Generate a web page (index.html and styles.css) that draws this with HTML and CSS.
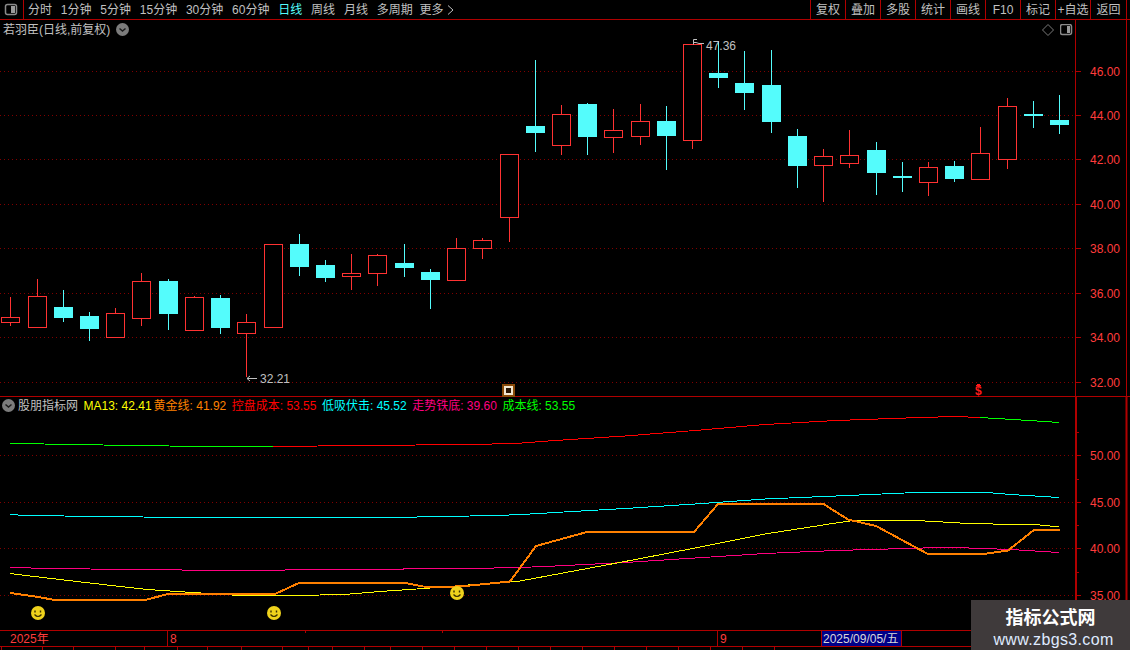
FILE: index.html
```html
<!DOCTYPE html>
<html lang="zh-CN">
<head>
<meta charset="utf-8">
<title>若羽臣 日线</title>
<link rel="stylesheet" href="styles.css">
</head>
<body>
<div class="app">
  <header class="toolbar">
    <button class="panel-btn"><svg width="18" height="14" viewBox="0 0 18 14"><rect class="ico-frame" x="2.500" y="1.500" width="11" height="10" rx="2"/><rect class="ico-fill" x="8" y="3" width="4" height="7"/></svg></button>
    <nav class="periods">
      <span>分时</span><span>1分钟</span><span>5分钟</span><span>15分钟</span><span>30分钟</span><span>60分钟</span>
      <span class="active">日线</span><span>周线</span><span>月线</span><span>多周期</span>
      <span class="more">更多<svg width="9" height="12" viewBox="0 0 9 12"><path class="chev" d="M2 1.500 7 6 2 10.500"/></svg></span>
    </nav>
    <div class="tools">
      <span>复权</span><span>叠加</span><span>多股</span><span>统计</span><span>画线</span><span>F10</span><span>标记</span><span>+自选</span><span>返回</span>
    </div>
  </header>

  <section class="pane pane-main">
    <svg class="chart" viewBox="0 20 1130 376" width="1130" height="376">
      <g class="grid">
        <path d="M0 71.500H1075M0 115.500H1075M0 159.500H1075M0 204.500H1075M0 248.500H1075M0 293.500H1075M0 337.500H1075M0 382.500H1075"/>
      </g>
      <path class="axis" d="M1075.500 20V396M1126.500 20V396"/>
      <path class="axis" d="M1075 71.500H1081M1075 115.500H1081M1075 159.500H1081M1075 204.500H1081M1075 248.500H1081M1075 293.500H1081M1075 337.500H1081M1075 382.500H1081"/>
      <g class="axis-text">
        <text x="1090" y="76">46.00</text><text x="1090" y="120">44.00</text><text x="1090" y="164">42.00</text><text x="1090" y="209">40.00</text><text x="1090" y="253">38.00</text><text x="1090" y="298">36.00</text><text x="1090" y="342">34.00</text><text x="1090" y="387">32.00</text>
      </g>

      <g class="up"><path d="M10.500 297V317M10.500 323V326"/><rect x="1.500" y="317.500" width="18" height="5"/></g>
      <g class="up"><path d="M37.500 279V296"/><rect x="28.500" y="296.500" width="18" height="31"/></g>
      <g class="down"><path d="M63.500 290V322"/><rect x="54.500" y="307.500" width="18" height="10"/></g>
      <g class="down"><path d="M89.500 312V341"/><rect x="80.500" y="316.500" width="18" height="12"/></g>
      <g class="up"><path d="M115.500 308V313"/><rect x="106.500" y="313.500" width="18" height="24"/></g>
      <g class="up"><path d="M141.500 273V281M141.500 319V326"/><rect x="132.500" y="281.500" width="18" height="37"/></g>
      <g class="down"><path d="M168.500 279V330"/><rect x="159.500" y="281.500" width="18" height="32"/></g>
      <g class="up"><path d="M194.500 296V297"/><rect x="185.500" y="297.500" width="18" height="33"/></g>
      <g class="down"><path d="M220.500 295V334"/><rect x="211.500" y="298.500" width="18" height="29"/></g>
      <g class="up"><path d="M246.500 314V322M246.500 334V377"/><rect x="237.500" y="322.500" width="18" height="11"/></g>
      <g class="up"><rect x="264.500" y="244.500" width="18" height="83"/></g>
      <g class="down"><path d="M299.500 234V276"/><rect x="290.500" y="244.500" width="18" height="22"/></g>
      <g class="down"><path d="M325.500 260V282"/><rect x="316.500" y="265.500" width="18" height="12"/></g>
      <g class="up"><path d="M351.500 254V273M351.500 277V290"/><rect x="342.500" y="273.500" width="18" height="3"/></g>
      <g class="up"><path d="M377.500 254V255M377.500 274V286"/><rect x="368.500" y="255.500" width="18" height="18"/></g>
      <g class="down"><path d="M404.500 244V277"/><rect x="395.500" y="263.500" width="18" height="4"/></g>
      <g class="down"><path d="M430.500 269V309"/><rect x="421.500" y="272.500" width="18" height="7"/></g>
      <g class="up"><path d="M456.500 238V248"/><rect x="447.500" y="248.500" width="18" height="32"/></g>
      <g class="up"><path d="M482.500 238V240M482.500 249V259"/><rect x="473.500" y="240.500" width="18" height="8"/></g>
      <g class="up"><path d="M509.500 218V242"/><rect x="500.500" y="154.500" width="18" height="63"/></g>
      <g class="down"><path d="M535.500 60V152"/><rect x="526.500" y="126.500" width="18" height="6"/></g>
      <g class="up"><path d="M561.500 105V114M561.500 146V155"/><rect x="552.500" y="114.500" width="18" height="31"/></g>
      <g class="down"><path d="M587.500 103V155"/><rect x="578.500" y="104.500" width="18" height="32"/></g>
      <g class="up"><path d="M613.500 109V130M613.500 138V153"/><rect x="604.500" y="130.500" width="18" height="7"/></g>
      <g class="up"><path d="M640.500 104V121M640.500 137V145"/><rect x="631.500" y="121.500" width="18" height="15"/></g>
      <g class="down"><path d="M666.500 106V170"/><rect x="657.500" y="121.500" width="18" height="14"/></g>
      <g class="up"><path d="M692.500 141V149"/><rect x="683.500" y="44.500" width="18" height="96"/></g>
      <g class="down"><path d="M718.500 41V88"/><rect x="709.500" y="73.500" width="18" height="4"/></g>
      <g class="down"><path d="M744.500 51V110"/><rect x="735.500" y="83.500" width="18" height="9"/></g>
      <g class="down"><path d="M771.500 50V133"/><rect x="762.500" y="85.500" width="18" height="36"/></g>
      <g class="down"><path d="M797.500 129V188"/><rect x="788.500" y="136.500" width="18" height="29"/></g>
      <g class="up"><path d="M823.500 149V156M823.500 166V202"/><rect x="814.500" y="156.500" width="18" height="9"/></g>
      <g class="up"><path d="M849.500 130V155M849.500 164V168"/><rect x="840.500" y="155.500" width="18" height="8"/></g>
      <g class="down"><path d="M876.500 142V195"/><rect x="867.500" y="150.500" width="18" height="22"/></g>
      <g class="down"><path d="M902.500 162V192"/><rect x="893.500" y="176.500" width="18" height="1"/></g>
      <g class="up"><path d="M928.500 162V167M928.500 183V196"/><rect x="919.500" y="167.500" width="18" height="15"/></g>
      <g class="down"><path d="M954.500 161V182"/><rect x="945.500" y="166.500" width="18" height="12"/></g>
      <g class="up"><path d="M980.500 127V153"/><rect x="971.500" y="153.500" width="18" height="26"/></g>
      <g class="up"><path d="M1007.500 98V106M1007.500 160V169"/><rect x="998.500" y="106.500" width="18" height="53"/></g>
      <g class="down"><path d="M1033.500 101V128"/><rect x="1024.500" y="114.500" width="18" height="1"/></g>
      <g class="down"><path d="M1059.500 95V134"/><rect x="1050.500" y="120.500" width="18" height="4"/></g>

      <path class="note-line" d="M247 378.500H257M247 378.500 250 376M247 378.500 250 381"/>
      <text class="note" x="260" y="383">32.21</text>
      <path class="note-line" d="M697 39.500H693.500V44.500M693.500 42.500H696L699 43.500H704"/>
      <text class="note" x="706" y="50">47.36</text>

      <path class="dollar-top" d="M976 385.500H981M977 384.500H980"/>
    </svg>
    <div class="pane-title">
      <span>若羽臣(日线,前复权)</span>
      <svg class="round-chev" width="13" height="13" viewBox="0 0 13 13"><circle cx="6.500" cy="6.500" r="6.500"/><path d="M3.500 5.500 6.500 8 9.500 5.500"/></svg>
    </div>
    <div class="pane-icons">
      <svg width="12" height="12" viewBox="0 0 12 12"><path class="diamond" d="M6 .5 11.500 6 6 11.500 .5 6Z"/></svg>
      <svg width="13" height="12" viewBox="0 0 13 12"><rect class="ico-frame" x=".5" y=".5" width="11" height="10" rx="2"/><rect class="ico-fill" x="7" y="2" width="3" height="7"/></svg>
    </div>
  </section>

  <section class="pane pane-sub">
    <svg class="chart" viewBox="0 397 1130 233" width="1130" height="233">
      <path class="grid-line" d="M0 455.500H1075M0 502.500H1075M0 548.500H1075M0 595.500H1075"/>
      <path class="axis heavy" d="M1076 397V630M1126.500 397V630"/>
      <path class="axis" d="M1075 455.500H1081M1075 502.500H1081M1075 548.500H1081M1075 595.500H1081M1075 432.500H1079M1075 479.500H1079M1075 525.500H1079M1075 572.500H1079M1075 618.500H1079"/>
      <g class="axis-text">
        <text x="1090" y="460">50.00</text><text x="1090" y="507">45.00</text><text x="1090" y="553">40.00</text><text x="1090" y="600">35.00</text>
      </g>
      <polyline class="ln ln-green" points="10,443.500 77,444.500 129,445.500 208,446.500 273,446.500"/>
      <polyline class="ln ln-red" points="273,446.500 364,445.500 469,444.500 516,443.500 555,440.500 625,436 695,430.500 765,424.500 836,420.500 906,418 955,416.500 980,417.500"/>
      <polyline class="ln ln-green" points="980,417.500 1029,420.500 1059,422.500"/>
      <polyline class="ln ln-cyan" points="10,514.500 25,515.500 103,516.500 182,517.500 391,517.500 496,515.500 522,514.500 555,512.500 625,508.500 695,504 765,499 836,496 916,492.500 987,492.500 1011,494.500 1059,497.500"/>
      <polyline class="ln ln-pink" points="10,567.500 51,568.500 129,569.500 234,570.500 338,569.500 469,568.500 520,567.500 555,566 625,562.500 695,558 765,553.500 836,550.500 941,547.500 969,548 1011,549.500 1059,552.500"/>
      <polyline class="ln ln-yellow" points="10,573.500 30,576 60,579.500 90,583 120,586.500 147,589.500 185,592 240,595.500 270,596 320,595 350,594 380,591.500 410,589.500 430,588 513,581.500 520,581 590,568 625,561.500 695,548 765,534 836,523 853,520.500 916,520.500 969,523.500 1040,525 1059,527"/>
      <polyline class="ln-thick" points="10,593 32,596 55,600 145,600 168,594 275,594 300,582.500 403,582.500 423,586.500 447,587 470,585.500 510,581.500 536,546 587,532 694,532 718,504 823.500,504 848,519.500 876,526 927,553.500 987,553.500 1008,550.500 1034,530 1060,530"/>
      <g class="smile" transform="translate(38 613)"><circle r="7"/><path class="eye" d="M-3-2.500v2M2.500-2.500v2"/><path class="mouth" d="M-3.500 1.500Q0 5.500 3.500 1.500"/></g>
      <g class="smile" transform="translate(274 613)"><circle r="7"/><path class="eye" d="M-3-2.500v2M2.500-2.500v2"/><path class="mouth" d="M-3.500 1.500Q0 5.500 3.500 1.500"/></g>
      <g class="smile" transform="translate(457 593)"><circle r="7"/><path class="eye" d="M-3-2.500v2M2.500-2.500v2"/><path class="mouth" d="M-3.500 1.500Q0 5.500 3.500 1.500"/></g>
    </svg>
    <div class="legend">
      <svg class="round-chev" width="13" height="13" viewBox="0 0 13 13"><circle cx="6.500" cy="6.500" r="6.500"/><path d="M3.500 5.500 6.500 8 9.500 5.500"/></svg>
      <span class="legend-name">股朋指标网</span>
      <span class="c-yellow">MA13: 42.41</span>
      <span class="c-orange">黄金线: 41.92</span>
      <span class="c-red">控盘成本: 53.55</span>
      <span class="c-cyan">低吸伏击: 45.52</span>
      <span class="c-pink">走势铁底: 39.60</span>
      <span class="c-green">成本线: 53.55</span>
    </div>
  </section>

  <div class="marker"><i></i></div>
  <div class="dollar">$</div>

  <div class="dates">
    <span class="d-year">2025年</span>
    <span class="d-month d-aug">8</span>
    <i class="d-tick d-tick-a"></i>
    <i class="d-tick d-tick-b"></i>
    <span class="d-month d-sep">9</span>
    <span class="d-current">2025/09/05/五</span>
  </div>
  <div class="tabs">
    <i></i><i></i><i></i><i></i><i></i><i></i><i></i><i></i><i></i><i></i><i></i><i></i><i></i><i></i><i></i><i></i><i></i><i></i><i></i><i></i><i></i><i></i><i></i><i></i><i></i>
  </div>

  <aside class="watermark">
    <strong>指标公式网</strong>
    <span>www.zbgs3.com</span>
  </aside>
</div>
</body>
</html>
```
FILE: styles.css
```css
* { box-sizing: border-box; }
html, body { margin: 0; height: 100%; background: #000; overflow: hidden; }
body { font: 12px/1 "Liberation Sans", "Noto Sans CJK SC", sans-serif; color: #c0c0c0; }

.app { position: relative; width: 1130px; height: 650px; display: flex; flex-direction: column; overflow: hidden; background: #000; }

/* toolbar */
.toolbar { height: 20px; flex: none; display: flex; align-items: stretch; border-bottom: 1px solid #b00000; }
.panel-btn { width: 24px; padding: 0 0 0 3px; background: none; border: 0; border-right: 1px solid #b00000; display: flex; align-items: center; }
.periods { flex: 1; display: flex; align-items: center; gap: 8.8px; padding-left: 4px; }
.periods .active { color: #54fcfc; }
.more { display: flex; align-items: center; gap: 2px; margin-left: -2px; }
.chev { fill: none; stroke: #c0c0c0; stroke-width: 1; }
.tools { display: flex; width: 317px; flex: none; margin-right: 3px; }
.tools span { flex: none; width: 35px; display: flex; align-items: center; justify-content: center; border-left: 1px solid #b00000; white-space: nowrap; }
.tools span:last-child { width: 37px; border-right: 1px solid #b00000; }
.ico-frame { fill: none; stroke: #8a8a8a; stroke-width: 1.5; }
.ico-fill { fill: #9a9a9a; }

/* panes */
.pane { position: relative; flex: none; }
.pane-main { height: 376px; }
.pane-sub { height: 234px; border-top: 1px solid #b00000; }
.chart { display: block; }

.grid path, .grid-line { fill: none; stroke: #800000; stroke-width: 1; stroke-dasharray: 1 3; }
.axis { fill: none; stroke: #b00000; stroke-width: 1; }
.axis.heavy { stroke-width: 2; }
.axis-text text { font: 12px "Liberation Sans", sans-serif; fill: #ff3c3c; }

.up path, .down path { fill: none; stroke-width: 1; shape-rendering: crispEdges; }
.up path { stroke: #ff3232; }
.down path { stroke: #54fcfc; }
.up rect { fill: #000; stroke: #ff3232; stroke-width: 1; shape-rendering: crispEdges; }
.down rect { fill: #54fcfc; stroke: #54fcfc; stroke-width: 1; shape-rendering: crispEdges; }

.note { font: 12px "Liberation Sans", sans-serif; fill: #c0c0c0; }
.note-line { fill: none; stroke: #c0c0c0; stroke-width: 1; }
.dollar-top { fill: none; stroke: #ff1a1a; stroke-width: 1; }
.dollar { position: absolute; left: 975px; top: 385px; width: 7px; font: bold 12px/12px "Liberation Sans", sans-serif; color: #ff1a1a; }

.pane-title { position: absolute; left: 3px; top: 3px; display: flex; align-items: center; gap: 6px; height: 13px; }
.pane-icons { position: absolute; left: 1042px; top: 4px; display: flex; align-items: center; gap: 6px; }
.diamond { fill: none; stroke: #7a7a7a; stroke-width: 1; }
.round-chev circle { fill: #7c7c7c; }
.round-chev path { fill: none; stroke: #1c1c1c; stroke-width: 1.5; }

.legend { position: absolute; left: 2px; top: 2px; display: flex; align-items: center; gap: 5.5px; height: 13px; white-space: nowrap; }
.legend-name { margin-left: -2.5px; }
.c-yellow { color: #ffff00; margin-right: -3.5px; }
.c-orange { color: #ff8000; }
.c-red { color: #ff0000; }
.c-cyan { color: #00ffff; }
.c-pink { color: #ff0080; }
.c-green { color: #00ff00; }

.ln { fill: none; stroke-width: 1; shape-rendering: crispEdges; }
.ln-green { stroke: #00ff00; }
.ln-red { stroke: #ff0000; }
.ln-cyan { stroke: #00ffff; }
.ln-pink { stroke: #ff0080; }
.ln-yellow { stroke: #ffff00; }
.ln-thick { fill: none; stroke: #ff8000; stroke-width: 2; shape-rendering: crispEdges; }

.smile circle { fill: #efd21c; }
.eye { fill: none; stroke: #3a2f00; stroke-width: 1.4; }
.mouth { fill: none; stroke: #3a2f00; stroke-width: 1.2; }

.marker { position: absolute; left: 502px; top: 384px; width: 13px; height: 13px; background: #8a4a08; display: flex; align-items: center; justify-content: center; }
.marker i { width: 9px; height: 9px; border: 1px solid #f2e6d0; background: #2a1502; display: flex; align-items: center; justify-content: center; }
.marker i::after { content: ""; width: 5px; height: 5px; border: 1px solid #f2e6d0; }

/* date strip */
.dates { position: relative; height: 17px; flex: none; border-top: 1px solid #b00000; border-bottom: 1px solid #b00000; color: #ff3c3c; }
.dates span { position: absolute; top: 0; height: 15px; display: flex; align-items: center; }
.d-year { left: 10px; }
.d-month { padding-left: 2px; border-left: 1px solid #b00000; }
.d-aug { left: 167px; }
.d-sep { left: 717px; }
.d-tick { position: absolute; top: 0; width: 1px; height: 2px; background: #b00000; }
.d-tick-a { left: 305px; }
.d-tick-b { left: 442px; }
.dates .d-current { left: 822px; width: 79px; padding-left: 1px; background: #000088; color: #d8d8d8; outline: 1px solid #b00000; white-space: nowrap; }

.tabs { flex: 1; display: grid; grid-template-columns: 2px 41px 31px 42px 29px 33px 30px 34px 41px 26px 24px 32px 26px 32px 32px 32px 32px 32px 32px 32px 32px 32px 32px 32px 32px; }
.tabs i { border-right: 1px solid #b00000; height: 4px; }

/* watermark */
.watermark { position: absolute; left: 971px; top: 600px; width: 159px; height: 50px; background: #3f3a3b; display: flex; flex-direction: column; align-items: center; padding-top: 6px; gap: 5px; }
.watermark strong { font: bold 18px/20px "Noto Sans CJK SC", sans-serif; color: #fff; }
.watermark span { font: 16px/17px "Liberation Sans", sans-serif; letter-spacing: .35px; color: #dfeaff; margin-left: 6px; }
```
